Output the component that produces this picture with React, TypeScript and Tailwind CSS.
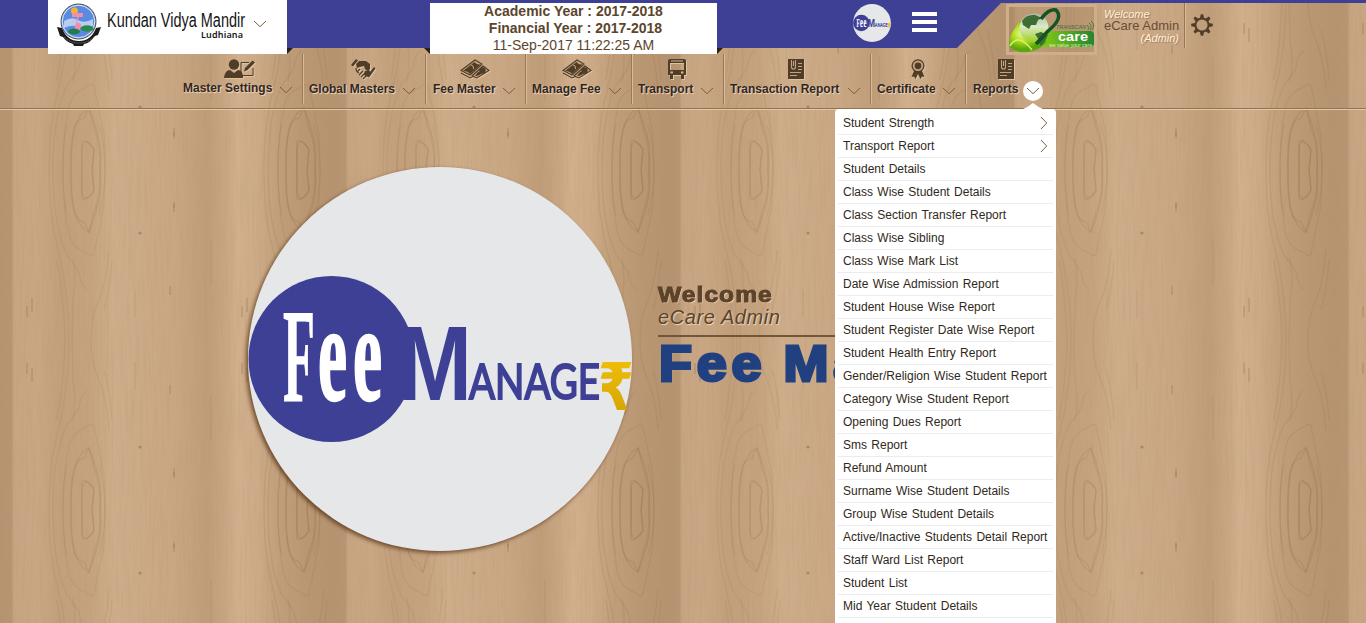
import React from "react";

const BROWN = "#4f3d28";

function Wood() {
  const knots = [
    { x: 87, dark: 0.15 },
    { x: 302, dark: 0.2 },
  ];
  const flecks: [number, number, number][] = [
    [27, 306, 11], [32, 298, 14], [242, 306, 11], [247, 298, 14], [170, 286, 9], [174, 202, 6], [174, 128, 8],
    [135, 290, 28], [211, 240, 45],
  ];
  const half = (
    <>
      {knots.map((k) => (
        <g key={k.x} transform={`translate(${k.x} 0)`} fill="none" stroke="#8a633e" strokeOpacity={k.dark} strokeWidth="1.5">
          <path d="M-5 170V142Q-4 139 0 142Q6 146 7 150L5 170L7 190Q4 196 -1 199Q-5 196 -5 190Z" />
          <path d="M-16 170Q-17 145 -13 129Q-11 120 -3 118L2 108Q6 118 11 135Q15 150 13 170Q14 195 7 212L2 232Q-5 228 -8 222Q-16 210 -16 170Z" />
          <path d="M-24 170Q-24 140 -20 125M-24 170Q-24 205 -18 235Q-14 248 -2 252Q6 258 7 254Q12 230 17 205M18 170Q18 145 12 125M18 170L17 205" strokeOpacity={k.dark * 0.7} />
          <path d="M-38 170Q-38 215 -30 245Q-18 290 -18 340M-34 170Q-34 225 -20 255Q-14 262 -8 272Q-6 287 0 289" strokeOpacity={k.dark * 0.7} />
          <path d="M-14 258Q-10 280 -14 300L-15 340M22 250Q19 285 11 302Q4 318 4 340M-30 260Q-23 300 -22 340M25 260Q23 290 17 310" strokeOpacity={k.dark * 0.7} />
        </g>
      ))}
      {flecks.map(([x, y, h], i) => (
        <path key={i} d={`M${x} ${y}v${h}`} stroke="#85603c" strokeOpacity={h > 20 ? ".15" : ".35"} strokeWidth="1.3" />
      ))}
      <circle cx="140" cy="233" r="1.6" fill="#805b38" fillOpacity=".45" />
    </>
  );
  return (
    <svg className="absolute inset-0 -z-10" width="1366" height="623" aria-hidden="true">
      <defs>
        <linearGradient id="plank" x1="0" x2="1" y1="0" y2="0">
          <stop offset="0" stopColor="#b59370" />
          <stop offset=".034" stopColor="#b79572" />
          <stop offset=".042" stopColor="#c7a582" />
          <stop offset=".11" stopColor="#c9a784" />
          <stop offset=".18" stopColor="#c3a07c" />
          <stop offset=".27" stopColor="#c5a37f" />
          <stop offset=".34" stopColor="#cead8a" />
          <stop offset=".45" stopColor="#cba986" />
          <stop offset=".52" stopColor="#c9a784" />
          <stop offset=".62" stopColor="#c09d79" />
          <stop offset=".68" stopColor="#c9a784" />
          <stop offset=".71" stopColor="#d2b08d" />
          <stop offset=".77" stopColor="#cdab88" />
          <stop offset=".84" stopColor="#c19e7a" />
          <stop offset=".92" stopColor="#ba9773" />
          <stop offset="1" stopColor="#b59370" />
        </linearGradient>
        <pattern id="wood" width="334" height="340" patternUnits="userSpaceOnUse">
          <rect width="334" height="340" fill="url(#plank)" />
          <g>{half}</g>
          <g transform="translate(0 680) scale(1 -1)">{half}</g>
          <g transform="translate(0 340) scale(1 -1)">{half}</g>
        </pattern>
        <filter id="grain" x="0" y="0" width="100%" height="100%">
          <feTurbulence type="fractalNoise" baseFrequency="0.42 0.018" numOctaves="3" seed="7" />
          <feColorMatrix values="0 0 0 0 .45  0 0 0 0 .3  0 0 0 0 .16  .9 0 0 0 -.37" />
        </filter>
      </defs>
      <rect width="1366" height="623" fill="url(#wood)" />
      <rect width="1366" height="623" filter="url(#grain)" opacity=".6" />
    </svg>
  );
}

function Chevron({ className = "" }: { className?: string }) {
  return (
    <svg className={className} width="14" height="8" viewBox="0 0 14 8" fill="none" stroke="#7d6042" strokeWidth="1">
      <path d="M1 1l6 5.700L13 1" />
    </svg>
  );
}

function UserEdit() {
  return (
    <svg width="32" height="20" viewBox="0 0 32 20" fill={BROWN}>
      <circle cx="10" cy="5.500" r="5.200" />
      <path d="M0 19q1-8 6-8l4 3 4-3q5 0 5 8z" />
      <path d="M25 3.500h-8v13h12V9" fill="none" stroke={BROWN} strokeWidth="1" />
      <path d="M20 12.500l1-3.500 7.500-7.500 2.500 2-7.500 7.500z" />
    </svg>
  );
}
function Handshake() {
  return (
    <svg width="26" height="20" viewBox="0 0 26 20" fill={BROWN}>
      <path d="M0 6L5 0l2 1.500-5 6zM5 5l3-3 7 0 4 3 0 5-2 2-3-2-1-3-4 1-3 1z" />
      <path d="M16 17l7-9 1.500 1.500-6.500 9zM14 12l4-1 2 3-4 4-3-2z" />
      <path d="M5 9q0 4 3 5m-2-1l3-3m-1 6l4-4m-2 6l4-4m-2 6l3-3" fill="none" stroke={BROWN} strokeWidth="1.200" />
    </svg>
  );
}
function Cash() {
  return (
    <svg width="30" height="20" viewBox="0 0 30 20" fill={BROWN}>
      <path d="M1 11.500L15 1l7 4 7 6-12 8-7-3z" fill="#c5a27e" />
      <path d="M1 11.500L15 1l7 4-12 11zM1 14l9 5 3-1.500M12 17l11-10 6 4.500-12 7.500z" fill="none" stroke={BROWN} strokeWidth="1.100" />
      <path d="M3 12L14.500 3q2 3 6 2.500L10 15q-2-3-7-3zM15 17q5 0 10-5l-2-3q-1 3-5 4z" />
      <circle cx="22.500" cy="11.500" r="3.200" />
      <path d="M11 6q3 0 2.500 4" fill="none" stroke="#c5a27e" strokeWidth="1" />
    </svg>
  );
}
function Bus() {
  return (
    <svg width="18" height="20" viewBox="0 0 18 20" fill={BROWN}>
      <path fillRule="evenodd" d="M2 0h14q2 0 2 2v14H0V2q0-2 2-2zM3 1.500v1h12v-1zM2 4v7h14V4zM2.500 12.500v2h2.500v-2zM13 12.500v2h2.500v-2z" />
      <path d="M2 16h3v4H2zM13 16h3v4h-3z" />
    </svg>
  );
}
function Report() {
  return (
    <svg width="18" height="20" viewBox="0 0 18 20">
      <path d="M1 0h16v20H1z" fill={BROWN} />
      <path d="M4.500 1v7q0 2 2 2t2-2V1M6.500 2v5M11 4.500h4M11 7.500h4M11 10.500h4M3 13.500h11M3 16.500h7" fill="none" stroke="#c5a27e" strokeWidth="1.100" />
    </svg>
  );
}
function Ribbon() {
  return (
    <svg width="14" height="20" viewBox="0 0 14 20" fill={BROWN}>
      <path d="M3 12L.5 18l2.500-.5L4.500 20 7 15l2.500 5 1.500-2.500 2.500.5L11 12z" />
      <circle cx="7" cy="6.800" r="5.900" fill="#c5a27e" stroke={BROWN} strokeWidth="1.300" />
      <circle cx="7" cy="6.800" r="3.400" />
    </svg>
  );
}

const nav: { label: string; icon: React.ReactNode; w: string; pad: string; shift: string }[] = [
  { label: "Master Settings", icon: <UserEdit />, w: "w-[127px]", pad: "pl-[6px] pr-[11px]", shift: "pr-[1px]" },
  { label: "Global Masters", icon: <Handshake />, w: "w-[123px]", pad: "pl-[5px] pr-[11px]", shift: "pr-[3px]" },
  { label: "Fee Master", icon: <Cash />, w: "w-[100px]", pad: "pl-[6px] pr-[11px]", shift: "pr-[4px]" },
  { label: "Manage Fee", icon: <Cash />, w: "w-[106px]", pad: "pl-[5px] pr-[11px]", shift: "pr-[6px]" },
  { label: "Transport", icon: <Bus />, w: "w-[92px]", pad: "pl-[5px] pr-[11px]", shift: "pr-[4px]" },
  { label: "Transaction Report", icon: <Report />, w: "w-[147px]", pad: "pl-[5px] pr-[11px]", shift: "pr-[6px]" },
  { label: "Certificate", icon: <Ribbon />, w: "w-[95px]", pad: "pl-[5px] pr-[11px]", shift: "pr-[4px]" },
  { label: "Reports", icon: <Report />, w: "w-[83px]", pad: "pl-[6px] pr-[7px]", shift: "pr-[5px]" },
];

const reports = [
  "Student Strength", "Transport Report", "Student Details", "Class Wise Student Details",
  "Class Section Transfer Report", "Class Wise Sibling", "Class Wise Mark List", "Date Wise Admission Report",
  "Student House Wise Report", "Student Register Date Wise Report", "Student Health Entry Report",
  "Gender/Religion Wise Student Report", "Category Wise Student Report", "Opening Dues Report", "Sms Report",
  "Refund Amount", "Surname Wise Student Details", "Group Wise Student Details",
  "Active/Inactive Students Detail Report", "Staff Ward List Report", "Student List", "Mid Year Student Details",
];

function FeeLogo({ size, className = "" }: { size: number; className?: string }) {
  const fit = { lengthAdjust: "spacingAndGlyphs" as const };
  return (
    <svg className={className} width={size} height={size} viewBox="0 0 386 386" overflow="visible">
      <defs>
        <linearGradient id="gold" x1="0" x2="0" y1="0" y2="1">
          <stop offset="0" stopColor="#f5c20a" />
          <stop offset="1" stopColor="#cf9f00" />
        </linearGradient>
      </defs>
      <circle cx="193" cy="193" r="192" fill="#e6e7e9" />
      <circle cx="84.500" cy="193" r="83" fill="#3d4095" />
      <g fontFamily="Liberation Serif, serif" fontWeight="700" fill="#fff" stroke="#fff">
        <text x="36" y="235" fontSize="134" textLength="32" strokeWidth="1" {...fit}>F</text>
        <text x="71" y="234" fontSize="138" textLength="29" strokeWidth="2.500" {...fit}>e</text>
        <text x="106" y="234" fontSize="138" textLength="29" strokeWidth="2.500" {...fit}>e</text>
      </g>
      <text x="151" y="234" fontFamily="Liberation Sans, sans-serif" fontSize="106" fontWeight="700" fill="#3d4095" textLength="74" {...fit}>M</text>
      <text x="222" y="233" fontFamily="Lato, sans-serif" fontSize="48" fill="#3d4095" stroke="#3d4095" strokeWidth="2" textLength="131" {...fit}>ANAGE</text>
      <text x="351" y="244" fontSize="66" fontWeight="700" fontFamily="DejaVu Sans, sans-serif" fill="url(#gold)" textLength="36" {...fit}>₹</text>
    </svg>
  );
}

function SchoolCrest() {
  return (
    <svg className="ml-2 mt-[3px]" width="46" height="43" viewBox="0 0 46 43">
      <path d="M1 24l5 1q5 13 17 13t17-13l5-1-3 8-3 1q-5 7-11 8l-1 2H18l-1-2Q10 39 7 34l-3-1z" fill="#1c1c1c" />
      <path d="M8 34q6 6 15 6t15-6" stroke="#999" fill="none" strokeWidth=".8" strokeDasharray="1 1" />
      <circle cx="22.500" cy="18.500" r="17.500" fill="#5b8be0" stroke="#555" strokeWidth="1" />
      <circle cx="22.500" cy="18.500" r="16.300" fill="none" stroke="#e9eef5" strokeWidth="1" />
      <path d="M8 18q8-5 14-1t15-1v7q-8 4-14 1T8 25z" fill="#b9cdf1" />
      <circle cx="18.500" cy="8" r="3.500" fill="#f3b52c" />
      <path d="M16 10h11v4H16zM21 14h2l-2 5 4 2q0 4-1 6h-5q-1-4 1-6z" fill="#f08db0" />
      <ellipse cx="18" cy="28.500" rx="6" ry="3" fill="#1f7d4a" />
      <ellipse cx="31" cy="25.500" rx="6.500" ry="3.200" fill="#2a8a4d" />
    </svg>
  );
}

function CareLogo() {
  return (
    <svg className="ml-[5px]" width="91" height="51" viewBox="0 0 91 51">
      <defs>
        <radialGradient id="ball" cx=".35" cy=".4">
          <stop offset="0" stopColor="#eefab0" />
          <stop offset=".5" stopColor="#b4e01a" />
          <stop offset="1" stopColor="#5aa80c" />
        </radialGradient>
        <linearGradient id="globe" x1="0" x2="0" y1="0" y2="1">
          <stop offset="0" stopColor="#a9b8a0" />
          <stop offset=".45" stopColor="#dbe8c8" />
          <stop offset="1" stopColor="#9bd11c" />
        </linearGradient>
        <linearGradient id="ribbon" x1="0" x2="1" y1="0" y2="0">
          <stop offset="0" stopColor="#8ed312" />
          <stop offset="1" stopColor="#248531" />
        </linearGradient>
      </defs>
      <rect x="1.500" y="1.500" width="88" height="48" fill="#8d6c48" fillOpacity=".2" stroke="#cfae8b" strokeWidth="3" />
      <path d="M35 27h49q4 0 4 4v8q0 4-5 4H30z" fill="url(#ribbon)" />
      <path d="M14 17Q0 35 4 43q5 6 18 5 10-1 18-9l2-18z" fill="url(#ball)" />
      <circle cx="28" cy="24" r="14.500" fill="url(#globe)" />
      <path d="M16 17q4-7 13-6l7 3-4 2-2 5-5 0-2 4-6-4zM29 30l6-2 7 3-5 9-3 2-1-6z" fill="#3f6b34" />
      <path d="M35 15Q43 4 50 6q8 8-8 21L30 40" fill="none" stroke="#145323" strokeWidth="3.500" />
      <path d="M4 42q8-14 22 4" fill="none" stroke="#d8ed79" strokeWidth="1.500" />
      <text x="50" y="25" fontFamily="Liberation Sans, sans-serif" fontStyle="italic" fontSize="5.500" fill="#376d32" textLength="30" lengthAdjust="spacingAndGlyphs">TRANSCAN</text>
      <text x="52" y="37" fontFamily="Liberation Sans, sans-serif" fontWeight="700" fontSize="13" fill="#fff" textLength="30" lengthAdjust="spacingAndGlyphs">care</text>
      <text x="43" y="42.500" fontFamily="Liberation Sans, sans-serif" fontSize="5" fill="#dcf69f" textLength="43" lengthAdjust="spacingAndGlyphs">we value your care</text>
      <path d="M81 21q3 2 1 5M83 19q4 3 1 7M85 17q5 4 1 9" fill="none" stroke="#376d32" strokeWidth=".8" />
    </svg>
  );
}

const emboss = "[text-shadow:1px_1px_1px_#f0d9bd]";

export default function App() {
  return (
    <div className="relative isolate flex h-[623px] w-[1366px] flex-col overflow-hidden bg-[#c8a683] font-['Liberation_Sans',Arial,sans-serif]">
      <Wood />
      <header className="relative flex h-[54px] shrink-0 items-start">
        <svg className="absolute inset-0 -z-10" width="1366" height="54">
          <path d="M0 0h1366v3H1001L957 48H0z" fill="#3e4095" />
          <path d="M287 48h6l-6 6zM430 48h-6l6 6zM717 48h6l-6 6z" fill="#2a2119" />
        </svg>
        <div className="ml-12 flex h-[54px] w-[239px] bg-white">
          <SchoolCrest />
          <svg className="ml-[4px]" width="142" height="42" overflow="visible">
            <text x="1" y="27" fontFamily="Liberation Sans Narrow, Liberation Sans, sans-serif" fontSize="20" fill="#151515" textLength="138" lengthAdjust="spacingAndGlyphs">Kundan Vidya Mandir</text>
            <text x="95" y="38" fontFamily="Noto Sans, sans-serif" fontWeight="600" fontSize="9" fill="#151515" textLength="42">Ludhiana</text>
          </svg>
          <Chevron className="ml-[5px] mt-5" />
        </div>
        <div className="ml-[143px] mt-[3px] h-[51px] w-[287px] bg-white text-center text-sm leading-[17px] text-[#5c452c]">
          <div className="font-bold">Academic Year : 2017-2018</div>
          <div className="pl-1 font-bold">Financial Year : 2017-2018</div>
          <div>11-Sep-2017 11:22:25 AM</div>
        </div>
        <FeeLogo size={38} className="ml-[136px] mt-1" />
        <div className="ml-[21px] mt-3 flex w-[25px] flex-col gap-1">
          <i className="h-1 bg-white" /><i className="h-1 bg-white" /><i className="h-1 bg-white" />
        </div>
        <div className="ml-16 mt-1"><CareLogo /></div>
        <div className="ml-[7px] mt-[9px] w-[75px] whitespace-nowrap leading-[12px] [text-shadow:1px_1px_1px_#a27d58]">
          <div className="text-[11px] italic leading-[10px] text-[#fff0dc]">Welcome</div>
          <div className="text-[13px] leading-[13px] text-[#674e35] [text-shadow:none]">eCare Admin</div>
          <div className="text-right text-[11px] italic text-[#fff0dc]">(Admin)</div>
        </div>
        <div className="ml-[5px] mt-[3px] h-[45px] w-[2px] border-l border-[#967653] bg-[#d8ba96]" />
        <svg className="ml-[5px] mt-3.5" width="22" height="22" viewBox="-11 -11 22 22" fill={BROWN}>
          {[0, 45, 90, 135, 180, 225, 270, 315].map((a) => (
            <path key={a} transform={`rotate(${a})`} d="M-2-7L-1.200-10.800H1.200L2-7z" />
          ))}
          <circle r="6.600" fill="none" stroke={BROWN} strokeWidth="2" />
        </svg>
      </header>

      <nav className="flex h-[56px] shrink-0 items-start border-b border-[#e5c9a6] pl-[177px] shadow-[inset_0_-1px_#8f7352]">
        {nav.map((n, i) => (
          <div key={n.label} className={`relative flex h-[50px] flex-col items-center pt-[5px] ${n.w}`}>
            <div className={`h-5 drop-shadow-[1px_1px_0_#dfc29f] ${n.shift}`}>{n.icon}</div>
            <div className={`flex w-full items-center justify-between ${n.pad} ${i === 0 ? "mt-0.5" : "mt-[3px]"}`}>
              <span className={`whitespace-nowrap text-xs font-bold leading-[14px] text-[#33271d] ${emboss}`}>{n.label}</span>
              {i === 7 ? (
                <span className="-my-1 flex h-5 w-5 translate-y-[2px] items-center justify-center rounded-full bg-white"><Chevron /></span>
              ) : (
                <Chevron className="relative top-[2px]" />
              )}
            </div>
            {i < 7 && <div className="absolute right-0 top-0 h-full w-[2px] border-l border-[#997956] bg-[#d9bb97]" />}
          </div>
        ))}
      </nav>

      <main className="flex pl-[247px] pt-[56px]">
        <FeeLogo size={386} className="drop-shadow-[-2px_2px_2px_rgba(80,45,15,0.75)]" />
        <div className="ml-[25px] mt-[117px] w-[380px] whitespace-nowrap">
          <div className={`w-fit origin-left scale-x-[1.12] text-[22px] font-bold leading-6 tracking-[0.9px] text-[#5c4329] [-webkit-text-stroke:1px_#5c4329] ${emboss}`}>Welcome</div>
          <div className={`text-xl italic leading-5 tracking-[0.6px] text-[#5c4329] ${emboss}`}>eCare Admin</div>
          <div className="mt-2 h-[2px] bg-[#715639]" />
          <div className="mt-[-3px] w-fit origin-left scale-x-[1.08] pl-px text-[50px] font-bold leading-[60px] tracking-[4.300px] text-[#204080] [-webkit-text-stroke:3px_#204080] [text-shadow:1px_1px_1px_#f3dfc6] [word-spacing:-2px]">Fee Manager</div>
        </div>
      </main>

      <div className="absolute left-[835px] top-[109px] h-[514px] w-[221px] rounded-t-[4px] bg-white px-[3px] pt-[3px]">
        <svg className="absolute -top-[6px] left-[186px]" width="24" height="7"><path d="M0 7q6-2 12-7 6 5 12 7z" fill="#fff" /></svg>
        {reports.map((r, i) => (
          <div key={r} className="flex h-[23px] items-center justify-between border-b border-[#ececec] pl-[5px] pr-1.5">
            <span className="whitespace-nowrap text-xs [word-spacing:1px] text-[#302820]">{r}</span>
            {i < 2 && <Chevron className="-mr-[4px] -rotate-90" />}
          </div>
        ))}
      </div>
    </div>
  );
}
